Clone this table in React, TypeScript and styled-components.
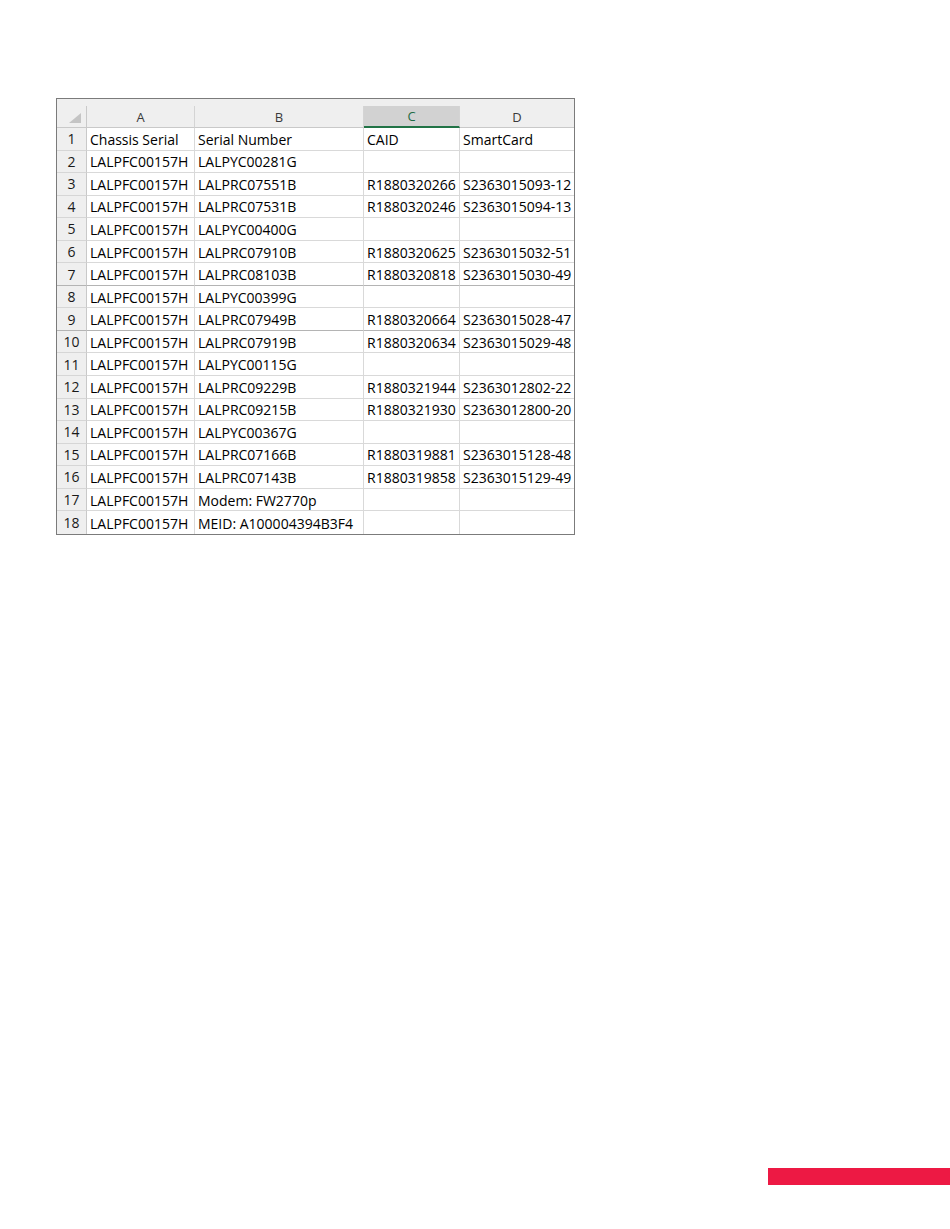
import styled, { createGlobalStyle } from 'styled-components'

const GlobalStyle = createGlobalStyle`
  html, body {
    margin: 0;
    padding: 0;
    background: #fff;
  }
`

const rows: string[][] = [
  ['Chassis Serial', 'Serial Number', 'CAID', 'SmartCard'],
  ['LALPFC00157H', 'LALPYC00281G', '', ''],
  ['LALPFC00157H', 'LALPRC07551B', 'R1880320266', 'S2363015093-12'],
  ['LALPFC00157H', 'LALPRC07531B', 'R1880320246', 'S2363015094-13'],
  ['LALPFC00157H', 'LALPYC00400G', '', ''],
  ['LALPFC00157H', 'LALPRC07910B', 'R1880320625', 'S2363015032-51'],
  ['LALPFC00157H', 'LALPRC08103B', 'R1880320818', 'S2363015030-49'],
  ['LALPFC00157H', 'LALPYC00399G', '', ''],
  ['LALPFC00157H', 'LALPRC07949B', 'R1880320664', 'S2363015028-47'],
  ['LALPFC00157H', 'LALPRC07919B', 'R1880320634', 'S2363015029-48'],
  ['LALPFC00157H', 'LALPYC00115G', '', ''],
  ['LALPFC00157H', 'LALPRC09229B', 'R1880321944', 'S2363012802-22'],
  ['LALPFC00157H', 'LALPRC09215B', 'R1880321930', 'S2363012800-20'],
  ['LALPFC00157H', 'LALPYC00367G', '', ''],
  ['LALPFC00157H', 'LALPRC07166B', 'R1880319881', 'S2363015128-48'],
  ['LALPFC00157H', 'LALPRC07143B', 'R1880319858', 'S2363015129-49'],
  ['LALPFC00157H', 'Modem: FW2770p', '', ''],
  ['LALPFC00157H', 'MEID: A100004394B3F4', '', ''],
]

const columns = ['A', 'B', 'C', 'D']
// rows whose bottom grid line shows darker in the capture
const darkBottom = [7, 9]

const App = () => {
  return (
    <Page>
      <GlobalStyle />
      <Sheet>
        <TopStrip />
        <Corner>
          <CornerMark />
        </Corner>
        {columns.map((c, i) => (
          <ColHead key={c} selected={c === 'C'} last={i === columns.length - 1}>
            {c}
          </ColHead>
        ))}
        {rows.map((r, ri) => {
          const n = ri + 1
          const dark = darkBottom.includes(n)
          const lastRow = n === rows.length
          return (
            <Row key={n}>
              <RowHead dark={dark} lastRow={lastRow}>{n}</RowHead>
              {r.map((v, ci) => (
                <Cell key={ci} dark={dark} last={ci === r.length - 1} lastRow={lastRow}>
                  {v}
                </Cell>
              ))}
            </Row>
          )
        })}
      </Sheet>
      <Footer>
        <RedBar />
      </Footer>
    </Page>
  )
}

export default App

const Page = styled.div`
  min-height: 1229px;
  box-sizing: border-box;
  display: flex;
  flex-direction: column;
  padding: 98px 0 44px 56px;
  font-family: "Open Sans", "Liberation Sans", sans-serif;
`

const Sheet = styled.div`
  width: 519px;
  box-sizing: border-box;
  border: 1px solid #7b7b7b;
  display: grid;
  grid-template-columns: 30px 108px 169px 96px 114px;
  background: #fff;
`

const TopStrip = styled.div`
  grid-column: 1 / -1;
  height: 7px;
  background: #efefef;
`

const Corner = styled.div`
  position: relative;
  height: 22px;
  box-sizing: border-box;
  background: #efefef;
  border-right: 1px solid #c9c9c9;
  border-bottom: 1px solid #c9c9c9;
`

const CornerMark = styled.div`
  position: absolute;
  right: 5px;
  bottom: 4px;
  width: 0;
  height: 0;
  border-left: 12px solid transparent;
  border-bottom: 10px solid #c4c4c4;
`

const ColHead = styled.div<{ selected?: boolean; last?: boolean }>`
  height: 22px;
  box-sizing: border-box;
  display: flex;
  align-items: center;
  justify-content: center;
  font-size: 13px;
  color: ${(p) => (p.selected ? '#1e6b45' : '#3a3a3a')};
  background: ${(p) => (p.selected ? '#d2d2d2' : '#efefef')};
  border-right: ${(p) => (p.last ? 'none' : '1px solid #d4d4d4')};
  border-bottom: ${(p) => (p.selected ? '2px solid #217346' : '1px solid #c9c9c9')};
`

const Row = styled.div`
  display: contents;
`

const RowHead = styled.div<{ dark?: boolean; lastRow?: boolean }>`
  height: 22.56px;
  box-sizing: border-box;
  display: flex;
  align-items: center;
  justify-content: center;
  font-size: 14px;
  color: #1a1a1a;
  background: #efefef;
  border-right: 1px solid #c9c9c9;
  border-bottom: ${(p) => (p.lastRow ? 'none' : p.dark ? '1px solid #b4b4b4' : '1px solid #d6d6d6')};
`

const Cell = styled.div<{ last?: boolean; lastRow?: boolean; dark?: boolean }>`
  height: 22.56px;
  box-sizing: border-box;
  display: flex;
  align-items: center;
  padding: 1px 0 0 3px;
  font-size: 14px;
  color: #000;
  white-space: nowrap;
  overflow: hidden;
  border-right: ${(p) => (p.last ? 'none' : '1px solid #d9d9d9')};
  border-bottom: ${(p) => (p.lastRow ? 'none' : p.dark ? '1px solid #b4b4b4' : '1px solid #d9d9d9')};
`

const Footer = styled.div`
  margin-top: auto;
  display: flex;
  justify-content: flex-end;
`

const RedBar = styled.div`
  width: 182px;
  height: 17px;
  background: #ed1944;
`
